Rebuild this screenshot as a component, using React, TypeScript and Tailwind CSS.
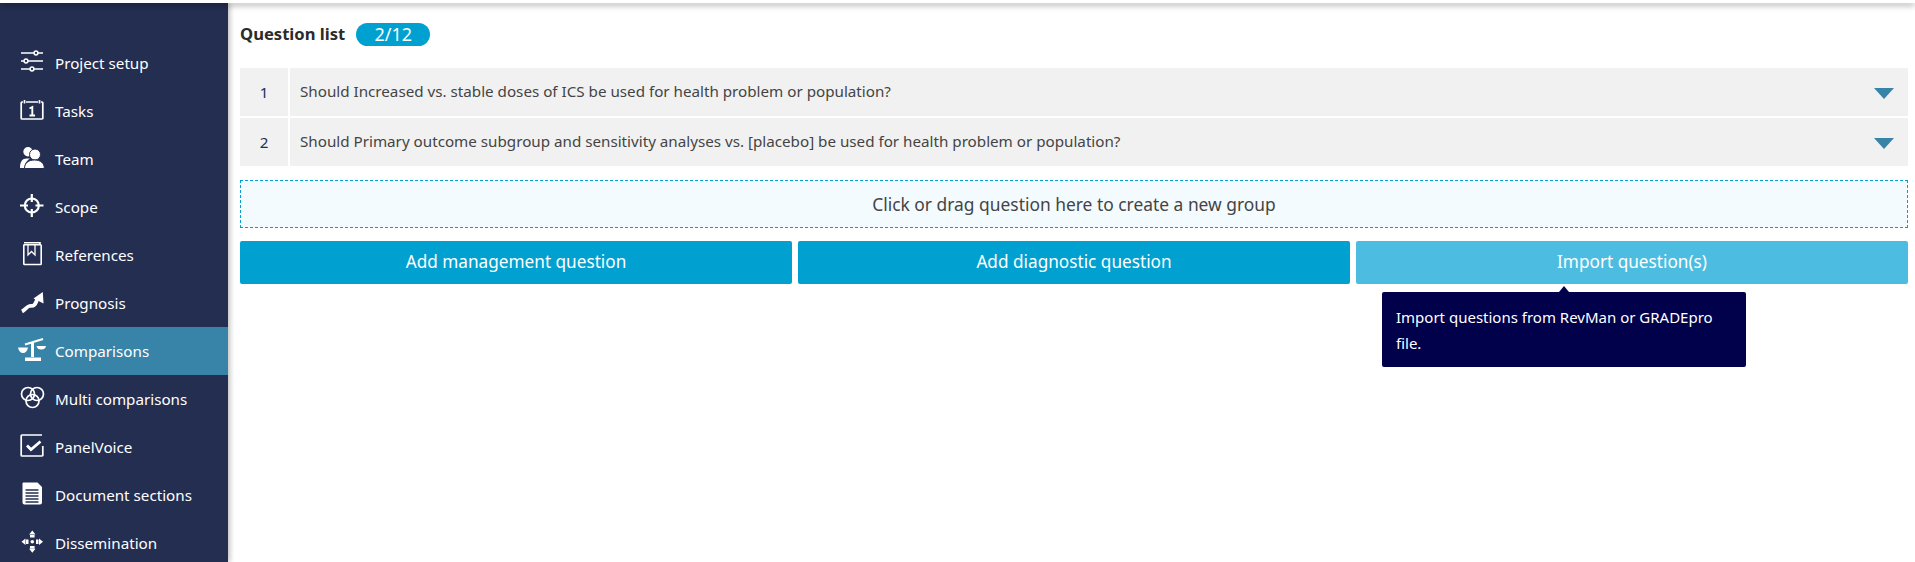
import React from "react";

const font = "font-['Noto_Sans','Open_Sans',sans-serif]";

const SetupIcon = () => (
  <svg viewBox="0 0 28 28" className="w-7 h-7" fill="none" stroke="white" strokeWidth="1.5">
    <path d="M3 4h13M20 4h5M3 12h3M10 12h15M3 20h9M16 20h9" />
    <circle cx="18" cy="4" r="1.900" />
    <circle cx="8" cy="12" r="1.900" />
    <circle cx="14" cy="20" r="1.900" />
  </svg>
);

const TasksIcon = () => (
  <svg viewBox="0 0 28 28" className="w-7 h-7" fill="none" stroke="white" strokeWidth="1.700">
    <path d="M5 5H4a.8.8 0 0 0-.8.8v15.400a.8.8 0 0 0 .8.8h20a.8.8 0 0 0 .8-.8V5.800A.8.8 0 0 0 24 5h-1M8 5h12" />
    <path d="M6.500 3v3.500M21.500 3v3.500" />
    <path d="M11.500 11.500l2.800-1.500v8.500M11.500 18.500h5.500" strokeWidth="1.900" />
  </svg>
);

const TeamIcon = () => (
  <svg viewBox="0 0 28 28" className="w-7 h-7" fill="white">
    <circle cx="10" cy="6.700" r="4.700" />
    <path d="M2 23c0-6.500 2.500-9.500 6.500-9.500h3.500c-3 2-5.500 5-5.500 9.500z" />
    <circle cx="17" cy="9.500" r="5.500" stroke="#242e51" strokeWidth="1" />
    <path d="M6.500 23.500c0-5.500 4-8.500 10-8.500s9.800 3 9.800 8.500z" stroke="#242e51" strokeWidth="1" />
  </svg>
);

const ScopeIcon = () => (
  <svg viewBox="0 0 28 28" className="w-7 h-7" fill="none" stroke="white">
    <circle cx="13.800" cy="12.500" r="7" strokeWidth="2.200" />
    <path d="M13.800 1v8M13.800 16v8M2 12.500h8M17.500 12.500h8" strokeWidth="2.200" />
  </svg>
);

const ReferencesIcon = () => (
  <svg viewBox="0 0 28 28" className="w-7 h-7" fill="none" stroke="white" strokeWidth="1.600">
    <path d="M5.800 3.500v19.200a.8.8 0 0 0 .8.8h15.800a.8.8 0 0 0 .8-.8V4.500a.8.8 0 0 0-.8-.8H5.800" />
    <path d="M6 1.800h16v2" />
    <path d="M10 4v10l3.500-3.500 3.500 3.500V4" strokeWidth="1.300" />
  </svg>
);

const PrognosisIcon = () => (
  <svg viewBox="0 0 28 28" className="w-7 h-7" fill="white">
    <path d="M4 22.500c3-1.500 5-5 7.500-5.500 3-.5 5.500 1.500 8-8" fill="none" stroke="white" strokeWidth="3.800" />
    <path d="M15.500 9.500L24.800 3l.7 11.500z" />
  </svg>
);

const ScaleIcon = () => (
  <svg viewBox="0 0 28 28" className="w-7 h-7" fill="white">
    <path d="M7 7.500L25 2" stroke="white" strokeWidth="2.200" />
    <path d="M13 5h3v15h-3z" />
    <path d="M7 20.500h16V24H7z" />
    <path d="M0 10.500h10c-.5 3.500-2.500 5.500-5 5.500s-4.500-2-5-5.500z" />
    <path d="M18.500 9H28c-.5 2.500-2 3.500-4.700 3.500s-4.300-1-4.800-3.500z" />
  </svg>
);

const MultiIcon = () => (
  <svg viewBox="0 0 28 28" className="w-7 h-7" fill="none" stroke="white" strokeWidth="1.700">
    <circle cx="10" cy="9" r="6.500" />
    <circle cx="19" cy="9" r="6.500" />
    <circle cx="14.500" cy="16" r="6.500" />
  </svg>
);

const PanelIcon = () => (
  <svg viewBox="0 0 28 28" className="w-7 h-7" fill="none" stroke="white">
    <path d="M24 2H4a.8.8 0 0 0-.8.8v19.400a.8.8 0 0 0 .8.8h20a.8.8 0 0 0 .8-.8V13" strokeWidth="1.700" />
    <path d="M9 12.500l4 4 9.500-8" strokeWidth="2.800" />
  </svg>
);

const DocumentIcon = () => (
  <svg viewBox="0 0 28 28" className="w-7 h-7">
    <path d="M5.500 1.500h14l4.500 4.500v15.500a2 2 0 0 1-2 2H6.500a2 2 0 0 1-2-2V2.500a1 1 0 0 1 1-1z" fill="white" />
    <path d="M7.500 9h13M7.500 12h13M7.500 15h13M7.500 18h13M7.500 21h13" stroke="#242e51" strokeWidth="1.400" />
  </svg>
);

const DisseminationIcon = () => (
  <svg viewBox="0 0 28 28" className="w-7 h-7" fill="white">
    <circle cx="14.300" cy="12.700" r="1.800" />
    <path d="M14.300 1.500l3.200 4h-6.400zM12 6h4.600v2.500H12z" />
    <path d="M14.300 23.800l3.200-4h-6.400zM12 16.900h4.600v2.500H12z" />
    <path d="M3.500 12.700l4-3.200v6.400zM8 10.400h2.500V15H8z" />
    <path d="M25 12.700l-4-3.200v6.400zM18 10.400h2.500V15H18z" />
  </svg>
);

const navItems = [
  { label: "Project setup", icon: <SetupIcon /> },
  { label: "Tasks", icon: <TasksIcon /> },
  { label: "Team", icon: <TeamIcon /> },
  { label: "Scope", icon: <ScopeIcon /> },
  { label: "References", icon: <ReferencesIcon /> },
  { label: "Prognosis", icon: <PrognosisIcon /> },
  { label: "Comparisons", icon: <ScaleIcon />, active: true },
  { label: "Multi comparisons", icon: <MultiIcon /> },
  { label: "PanelVoice", icon: <PanelIcon /> },
  { label: "Document sections", icon: <DocumentIcon /> },
  { label: "Dissemination", icon: <DisseminationIcon /> },
];

const questions = [
  "Should Increased vs. stable doses of ICS be used for health problem or population?",
  "Should Primary outcome subgroup and sensitivity analyses vs. [placebo] be used for health problem or population?",
];

const App = () => {
  return (
    <div className={`h-[562px] overflow-hidden flex flex-col bg-white ${font}`}>
      {/* Top edge */}
      <div className="h-[3px] shrink-0 bg-white shadow-[0_2px_6px_rgba(0,0,0,0.45)] z-10" />

      <div className="flex flex-1 min-h-0">
        {/* Sidebar */}
        <aside className="w-[228px] shrink-0 bg-[#242e51] pt-9 shadow-[2px_0_5px_rgba(0,0,0,0.25)]">
          {navItems.map((item) => (
            <div
              key={item.label}
              className={`h-12 flex items-center gap-[9px] pl-[18px] text-white text-[15.2px] ${
                item.active ? "bg-[#3883a8]" : ""
              }`}
            >
              {item.icon}
              <span>{item.label}</span>
            </div>
          ))}
        </aside>

        {/* Main Content */}
        <main className="flex-1 min-w-0 pl-3 pr-[7px] text-[#333]">
          <div className="h-[65px] flex items-start pt-[18px] gap-[11px]">
            <h1 className="text-[16.6px] leading-[26px] font-bold text-[#2b2b2b]">Question list</h1>
            <span className="w-[74px] h-[23px] mt-[2px] rounded-full bg-[#00a0d0] text-white text-lg leading-[22px] text-center">
              2/12
            </span>
          </div>

          <div className="flex flex-col gap-[2px]">
            {questions.map((q, i) => (
              <div key={q} className="flex h-12 gap-[2px] text-[15.2px]">
                <div className="w-[48px] bg-[#f1f1f1] flex items-center justify-center text-[#242e51]">
                  {i + 1}
                </div>
                <div className="flex-1 bg-[#f1f1f1] flex items-center justify-between pl-[10px] pr-[14px]">
                  <span className="text-[#444] -mt-[2px]">{q}</span>
                  <div className="mt-[3px] w-0 h-0 border-x-[10px] border-x-transparent border-t-[11px] border-t-[#3883a8]" />
                </div>
              </div>
            ))}
          </div>

          <div className="mt-[14px] h-[48px] border border-dashed border-[#00a0d0] bg-[#f3fbff] flex items-center justify-center text-[17.4px] text-[#444]">
            Click or drag question here to create a new group
          </div>

          <div className="mt-[13px] flex gap-[6px]">
            <button className="flex-1 h-[43px] rounded-[2px] bg-[#00a0d0] text-white text-[17.2px] pb-[2px]">
              Add management question
            </button>
            <button className="flex-1 h-[43px] rounded-[2px] bg-[#00a0d0] text-white text-[17.2px] pb-[2px]">
              Add diagnostic question
            </button>
            <div className="flex-1 relative">
              <button className="w-full h-[43px] rounded-[2px] bg-[#4cbde0] text-white text-[17.2px] pb-[2px]">
                Import question(s)
              </button>
              {/* Tooltip */}
              <div className="absolute left-[26px] top-[51px] w-[364px] h-[75px] rounded-[2px] bg-[#00004b] text-white text-[15px] leading-[26px] px-[14px] py-[12px]">
                <div className="absolute left-[177px] -top-[6px] w-0 h-0 border-x-[5px] border-x-transparent border-b-[6px] border-b-[#00004b]" />
                Import questions from RevMan or GRADEpro file.
              </div>
            </div>
          </div>
        </main>
      </div>
    </div>
  );
};

export default App;
